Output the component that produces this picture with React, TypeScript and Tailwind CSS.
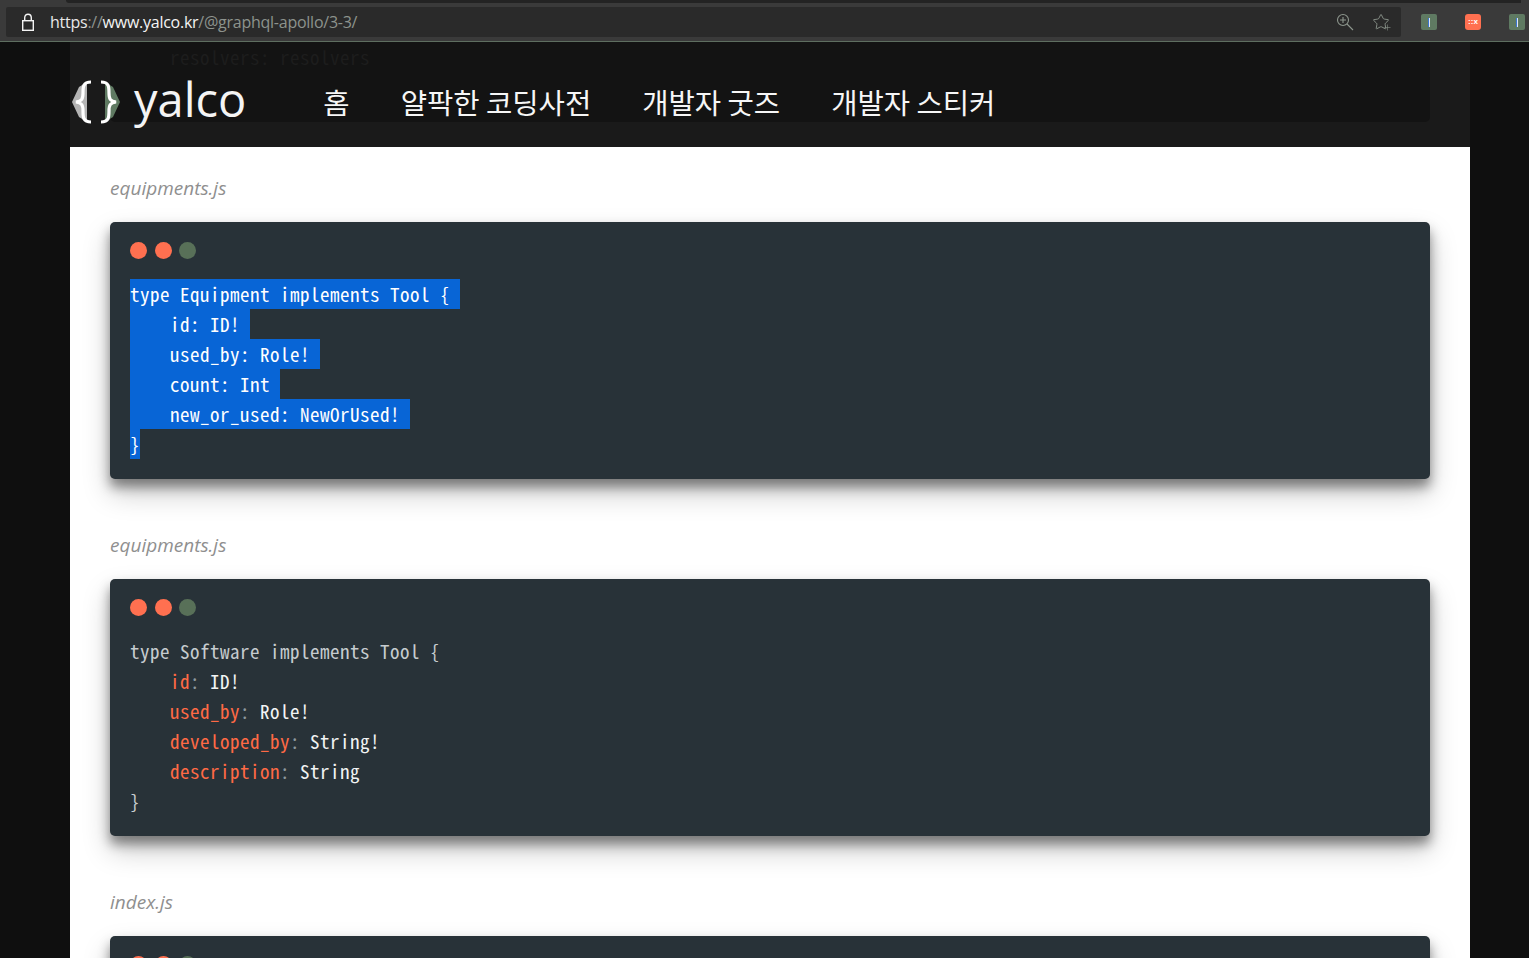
import { Star, Plus } from "lucide-react";

const mono = "font-['Noto_Sans_Mono_CJK_KR','Liberation_Mono',monospace] text-[19px] tracking-[0.5px] leading-[29px]";

function Dots() {
  return (
    <div className="flex gap-[7.5px] mb-[20px]">
      <span className="w-[17px] h-[17px] rounded-full bg-[#ff7050]" />
      <span className="w-[17px] h-[17px] rounded-full bg-[#ff7050]" />
      <span className="w-[17px] h-[17px] rounded-full bg-[#587058]" />
    </div>
  );
}

function ExtIcon({ red }: { red?: boolean }) {
  if (red) {
    return (
      <span className="w-[16px] h-[16px] rounded-[3px] bg-[#ff7050] flex items-center justify-center text-[8px] leading-none font-bold text-white font-['Liberation_Sans',sans-serif]">
        ::x
      </span>
    );
  }
  return (
    <span className="w-[16px] h-[16px] rounded-[2px] bg-[#5f7a62] flex items-center justify-center">
      <span className="w-[2px] h-[9px] bg-[#dfe8f5] border-l border-[#3b76d0]" />
    </span>
  );
}

function Sel({ children, pad }: { children: string; pad: number }) {
  return (
    <div className="h-[30px]">
      <span className="inline-block h-[30px] bg-[#0865d6] text-white whitespace-pre" style={{ width: pad }}>
        {children}
      </span>
    </div>
  );
}

function Line({ k, v }: { k: string; v: string }) {
  return (
    <div className="h-[30px] whitespace-pre">
      {"    "}
      <span className="text-[#ff6a45]">{k}</span>
      <span className="text-[#8d979c]">: </span>
      <span className="text-[#f2f4f4]">{v}</span>
    </div>
  );
}

function FileName({ children }: { children: string }) {
  return (
    <div className="font-['Open_Sans','Noto_Sans',sans-serif] italic text-[19px] leading-[26px] text-[#8f8f8f] mb-[21px]">
      {children}
    </div>
  );
}

const panel = "bg-[#283238] rounded-[5px] px-[20px] pt-[20px] shadow-[0_8px_12px_rgba(0,0,0,0.42),0_14px_28px_rgba(0,0,0,0.22)]";

export default function App() {
  return (
    <div className="h-[958px] overflow-hidden flex flex-col bg-[#0f0f0f]">
      {/* browser chrome */}
      <div className="h-[42px] shrink-0 bg-[#3a3a3a] border-b border-[#5e6e60] flex flex-col">
        <div className="h-[3px] bg-[#232323] ml-[66px] mr-[8px] rounded-bl-[3px]" />
        <div className="flex-1 flex items-center">
          <div className="ml-[6px] w-[1395px] h-[30px] bg-[#2a2a2a] rounded-[2px] flex items-center">
            <svg width="16" height="18" viewBox="0 0 16 18" className="ml-[14px] text-[#f4f4f4]" fill="none" stroke="currentColor" strokeWidth="1.4">
              <rect x="2.7" y="7.7" width="10.6" height="9.6" />
              <path d="M4.7 7.5 V4.8 C4.7 0 11.3 0 11.3 4.8 V7.5" />
            </svg>
            <span className="ml-[14px] font-['Open_Sans','Noto_Sans',sans-serif] text-[16px] tracking-[-0.25px] text-[#8d938d]">
              <span className="text-[#e8e8e8]">https</span>://<span className="text-[#f4f4f4]">www.yalco.kr</span>/@graphql-apollo/3-3/
            </span>
            <div className="ml-auto flex items-center mr-[11px] gap-[18px] text-[#8d968d]">
              <svg width="18" height="18" viewBox="0 0 18 18" fill="none" stroke="currentColor" strokeWidth="1.1">
                <circle cx="7" cy="7" r="5.5" />
                <path d="M11 11 L17 17 M7 4 V10 M4 7 H10" />
              </svg>
              <span className="relative">
                <Star size={18} strokeWidth={1.2} />
                <Plus size={9} strokeWidth={1.5} className="absolute -right-[2px] -bottom-[1px]" />
              </span>
            </div>
          </div>
          <div className="ml-[20px] flex gap-[28px]">
            <ExtIcon />
            <ExtIcon red />
            <ExtIcon />
          </div>
        </div>
      </div>

      <div className="ml-[70px] w-[1400px] flex-1 flex flex-col relative">
        {/* page behind the fixed header */}
        <div className="h-[105px] shrink-0 bg-[#1a1a1a] px-[40px]">
          <div className={mono + " h-[80px] bg-[#131313] rounded-b-[5px] pl-[60px] text-[#1d1d1d] whitespace-pre"}>
            resolvers: resolvers
          </div>
        </div>

        <div className="absolute left-0 top-[35px] flex items-center">
          <svg width="52" height="46" viewBox="0 0 52 46">
            <path d="M2 23 L9 8 L17 3 L17 43 L9 38 Z" fill="#b5b5b5" />
            <path d="M35 3 L43 8 L50 23 L43 38 L35 43 Z" fill="#5f7a62" />
            <path
              d="M21 3 C13 3 13 8 13 14 C13 20 12 22 6 23 C12 24 13 26 13 32 C13 38 13 43 21 43"
              fill="none"
              stroke="#ffffff"
              strokeWidth="3.2"
            />
            <path
              d="M31 3 C39 3 39 8 39 14 C39 20 40 22 46 23 C40 24 39 26 39 32 C39 38 39 43 31 43"
              fill="none"
              stroke="#ffffff"
              strokeWidth="3.2"
            />
          </svg>
          <span className="ml-[12px] font-['Open_Sans',sans-serif] text-[47px] leading-[50px] text-[#f4f4f4] -translate-y-[3px]">yalco</span>
          <nav className="ml-[77px] flex gap-[51px] font-['Noto_Sans_CJK_KR',sans-serif] text-[28.6px] leading-[40px] text-[#f6f6f6]">
            <span>홈</span>
            <span>얄팍한 코딩사전</span>
            <span>개발자 굿즈</span>
            <span>개발자 스티커</span>
          </nav>
        </div>

        {/* article */}
        <div className="flex-1 bg-white px-[40px] pt-[28px]">
          <FileName>equipments.js</FileName>
          <div className={panel + " h-[257px]"}>
            <Dots />
            <div className={mono}>
              <Sel pad={330}>{"type Equipment implements Tool {"}</Sel>
              <Sel pad={120}>{"    id: ID!"}</Sel>
              <Sel pad={190}>{"    used_by: Role!"}</Sel>
              <Sel pad={150}>{"    count: Int"}</Sel>
              <Sel pad={280}>{"    new_or_used: NewOrUsed!"}</Sel>
              <Sel pad={10}>{"}"}</Sel>
            </div>
          </div>

          <div className="mt-[53px]">
            <FileName>equipments.js</FileName>
          </div>
          <div className={panel + " h-[257px]"}>
            <Dots />
            <div className={mono + " text-[#c6cccf]"}>
              <div className="h-[30px] whitespace-pre">{"type Software implements Tool {"}</div>
              <Line k="id" v="ID!" />
              <Line k="used_by" v="Role!" />
              <Line k="developed_by" v="String!" />
              <Line k="description" v="String" />
              <div className="h-[30px]">{"}"}</div>
            </div>
          </div>

          <div className="mt-[53px]">
            <FileName>index.js</FileName>
          </div>
          <div className={panel + " h-[257px]"}>
            <Dots />
          </div>
        </div>
      </div>
    </div>
  );
}
